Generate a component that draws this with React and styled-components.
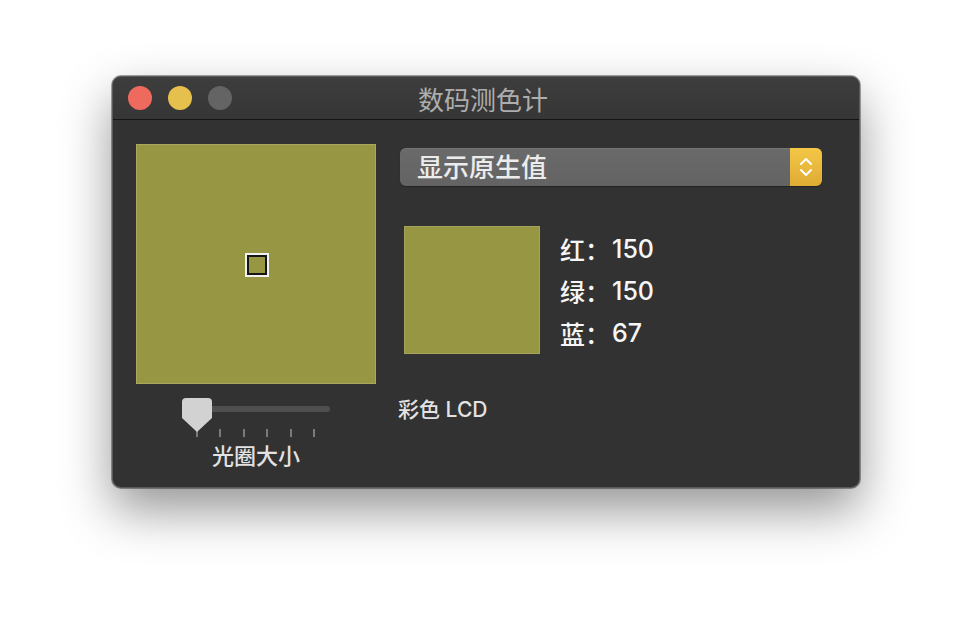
import React from 'react';
import styled, { createGlobalStyle } from 'styled-components';

const GlobalStyle = createGlobalStyle`
  html, body {
    margin: 0;
    padding: 0;
    background: #ffffff;
  }
  body {
    font-family: "Inter", "Noto Sans CJK SC", sans-serif;
  }
`;

const sample = { r: 150, g: 150, b: 67 };
const swatchColor = `rgb(${sample.r}, ${sample.g}, ${sample.b})`;

const ticks = [0, 1, 2, 3, 4, 5];

const App = () => {
  return (
    <>
      <GlobalStyle />
      <Page>
        <Window>
          <TitleBar>
            <Lights>
              <Light color="#ee6a5f" />
              <Light color="#e6c04c" />
              <Light color="#646464" />
            </Lights>
            <Title>数码测色计</Title>
          </TitleBar>

          <Content>
            <LeftColumn>
              <Magnifier style={{ background: swatchColor }}>
                <Aperture />
              </Magnifier>

              <SliderBlock>
                <Slider>
                  <Track />
                  <Thumb viewBox="0 0 30 34">
                    <path d="M4 0 H26 A4 4 0 0 1 30 4 V20 L15 34 L0 20 V4 A4 4 0 0 1 4 0 Z" fill="#d2d2d2" />
                  </Thumb>
                </Slider>
                <Ticks>
                  {ticks.map((t) => (
                    <Tick key={t} />
                  ))}
                </Ticks>
                <SliderLabel>光圈大小</SliderLabel>
              </SliderBlock>
            </LeftColumn>

            <RightColumn>
              <Popup>
                <PopupText>显示原生值</PopupText>
                <PopupArrows>
                  <svg width="16" height="24" viewBox="0 0 16 24">
                    <path d="M3 9 L8 4 L13 9" fill="none" stroke="#fff" strokeWidth="2" strokeLinecap="round" strokeLinejoin="round" />
                    <path d="M3 15 L8 20 L13 15" fill="none" stroke="#fff" strokeWidth="2" strokeLinecap="round" strokeLinejoin="round" />
                  </svg>
                </PopupArrows>
              </Popup>

              <SampleRow>
                <Sample style={{ background: swatchColor }} />
                <Values>
                  <ValueRow>
                    <ValueName>红：</ValueName>
                    <ValueNumber>{sample.r}</ValueNumber>
                  </ValueRow>
                  <ValueRow>
                    <ValueName>绿：</ValueName>
                    <ValueNumber>{sample.g}</ValueNumber>
                  </ValueRow>
                  <ValueRow>
                    <ValueName>蓝：</ValueName>
                    <ValueNumber>{sample.b}</ValueNumber>
                  </ValueRow>
                </Values>
              </SampleRow>

              <ColorSpace>彩色 LCD</ColorSpace>
            </RightColumn>
          </Content>
        </Window>
      </Page>
    </>
  );
};

const Page = styled.div`
  width: 972px;
  height: 636px;
  padding: 76px 0 0 112px;
  box-sizing: border-box;
`;

const Window = styled.div`
  width: 748px;
  height: 412px;
  box-sizing: border-box;
  background: #323232;
  border: 1px solid #5a5a5a;
  border-radius: 9px;
  overflow: hidden;
  box-shadow: 0 22px 50px rgba(0, 0, 0, 0.42), 0 0 0 1px rgba(0, 0, 0, 0.35);
  display: flex;
  flex-direction: column;
`;

const TitleBar = styled.div`
  height: 42px;
  flex-shrink: 0;
  display: flex;
  align-items: center;
  justify-content: center;
  position: relative;
  background: linear-gradient(#3d3d3d, #363636);
  border-bottom: 1px solid #141414;
`;

const Lights = styled.div`
  position: absolute;
  left: 15px;
  top: 9px;
  display: flex;
  gap: 16px;
`;

const Light = styled.span`
  width: 24px;
  height: 24px;
  border-radius: 50%;
  background: ${(p) => p.color};
`;

const Title = styled.div`
  font-family: "Noto Sans CJK SC", sans-serif;
  font-size: 26px;
  font-weight: 400;
  color: #adadad;
  margin-left: -6px;
`;

const Content = styled.div`
  display: grid;
  grid-template-columns: 240px 1fr;
  column-gap: 24px;
  padding: 24px 23px 0 23px;
`;

const LeftColumn = styled.div`
  display: flex;
  flex-direction: column;
  align-items: center;
`;

const Magnifier = styled.div`
  width: 240px;
  height: 240px;
  box-sizing: border-box;
  border: 1px solid #a9a85e;
  display: flex;
  align-items: center;
  justify-content: center;
`;

const Aperture = styled.div`
  width: 24px;
  height: 24px;
  box-sizing: border-box;
  border: 2px solid #f2f2f2;
  box-shadow: inset 0 0 0 2px #151515;
  margin: 0 -1px -2px 0;
`;

const SliderBlock = styled.div`
  margin-top: 14px;
  display: flex;
  flex-direction: column;
  align-items: center;
`;

const Slider = styled.div`
  position: relative;
  width: 148px;
  height: 32px;
`;

const Track = styled.div`
  position: absolute;
  left: 1px;
  right: 0;
  top: 8px;
  height: 6px;
  border-radius: 3px;
  background: #4f4f4f;
`;

const Thumb = styled.svg`
  position: absolute;
  left: 0;
  top: 0;
  width: 30px;
  height: 34px;
`;

const Ticks = styled.div`
  display: flex;
  gap: 21.6px;
  margin-top: -1px;
  margin-right: 1px;
`;

const Tick = styled.span`
  width: 2px;
  height: 8px;
  background: #7a7a7a;
`;

const SliderLabel = styled.div`
  font-family: "Noto Sans CJK SC", sans-serif;
  font-size: 22px;
  font-weight: 500;
  line-height: 26px;
  color: #e2e2e2;
  margin-top: 4px;
`;

const RightColumn = styled.div`
  display: flex;
  flex-direction: column;
  align-items: flex-start;
  padding-top: 4px;
`;

const Popup = styled.div`
  width: 422px;
  height: 38px;
  display: flex;
  border-radius: 6px;
  overflow: hidden;
  background: linear-gradient(#6a6a6a, #636363);
  box-shadow: 0 1px 1px rgba(0, 0, 0, 0.35), inset 0 1px 0 rgba(255, 255, 255, 0.08);
`;

const PopupText = styled.div`
  flex: 1;
  padding-left: 17px;
  font-family: "Noto Sans CJK SC", sans-serif;
  font-size: 26px;
  font-weight: 500;
  line-height: 36px;
  color: #ececec;
`;

const PopupArrows = styled.div`
  width: 32px;
  display: flex;
  align-items: center;
  justify-content: center;
  background: linear-gradient(#f4c746, #dfab34);
`;

const SampleRow = styled.div`
  display: flex;
  margin-top: 40px;
  margin-left: 4px;
  gap: 20px;
`;

const Sample = styled.div`
  width: 136px;
  height: 128px;
  box-sizing: border-box;
  border: 1px solid #a5a45b;
`;

const Values = styled.div`
  display: flex;
  flex-direction: column;
  padding-top: 2px;
`;

const ValueRow = styled.div`
  display: flex;
  align-items: center;
  height: 42px;
  color: #f6f6f6;
`;

const ValueName = styled.span`
  font-family: "Noto Sans CJK SC", sans-serif;
  font-size: 25px;
  font-weight: 500;
`;

const ValueNumber = styled.span`
  font-family: "Inter", sans-serif;
  font-size: 25px;
  font-weight: 500;
  margin-left: 2px;
`;

const ColorSpace = styled.div`
  margin-top: 44px;
  font-family: "Inter", "Noto Sans CJK SC", sans-serif;
  font-size: 21px;
  font-weight: 500;
  line-height: 24px;
  color: #e2e2e2;
  margin-left: -2px;
`;

export default App;
